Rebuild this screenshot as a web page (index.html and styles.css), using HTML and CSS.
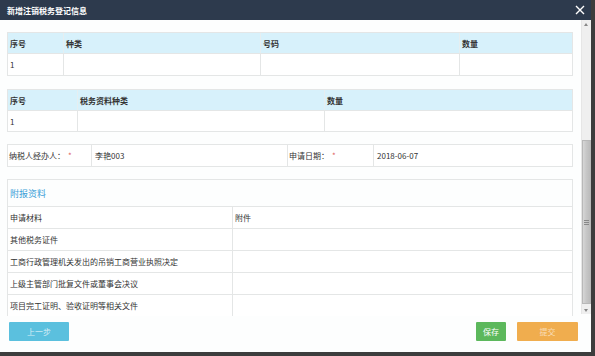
FILE: index.html
```html
<!DOCTYPE html>
<html lang="zh">
<head>
<meta charset="utf-8">
<link rel="stylesheet" href="styles.css">
</head>
<body>
<div class="dialog">
  <div class="header">
    <span class="title">新增注销税务登记信息</span>
    <svg class="close" width="10" height="10" viewBox="0 0 10 10"><path d="M1 1L9 9M9 1L1 9" stroke="#fff" stroke-width="1.4"/></svg>
  </div>
  <div class="main">
    <div class="scroll">
      <div class="grid t1">
        <div class="row head"><div class="c">序号</div><div class="c">种类</div><div class="c">号码</div><div class="c">数量</div></div>
        <div class="row body tall"><div class="c">1</div><div class="c"></div><div class="c"></div><div class="c"></div></div>
      </div>
      <div class="grid t2">
        <div class="row head"><div class="c">序号</div><div class="c">税务资料种类</div><div class="c">数量</div></div>
        <div class="row body"><div class="c">1</div><div class="c"></div><div class="c"></div></div>
      </div>
      <div class="grid t3">
        <div class="row body tall"><div class="c">纳税人经办人：<span class="req">*</span></div><div class="c">李艳003</div><div class="c">申请日期：<span class="req">*</span></div><div class="c">2018-06-07</div></div>
      </div>
      <div class="grid t4">
        <div class="row caption"><div class="c">附报资料</div></div>
        <div class="row body tall"><div class="c">申请材料</div><div class="c">附件</div></div>
        <div class="row body tall"><div class="c">其他税务证件</div><div class="c"></div></div>
        <div class="row body tall"><div class="c">工商行政管理机关发出的吊销工商营业执照决定</div><div class="c"></div></div>
        <div class="row body tall"><div class="c">上级主管部门批复文件或董事会决议</div><div class="c"></div></div>
        <div class="row body tall"><div class="c">项目完工证明、验收证明等相关文件</div><div class="c"></div></div>
      </div>
    </div>
    <div class="scrollbar">
      <div class="arrow up"></div>
      <div class="track"><div class="thumb"><span class="grip"></span></div></div>
      <div class="arrow down"></div>
    </div>
  </div>
  <div class="footer">
    <button class="btn prev">上一步</button>
    <span class="spacer"></span>
    <button class="btn save">保存</button>
    <button class="btn submit">提交</button>
  </div>
</div>
</body>
</html>
```
FILE: styles.css
```css
* { box-sizing: border-box; }
html, body { margin: 0; padding: 0; }
body {
  width: 595px;
  height: 356px;
  background: #3d3d3d;
  font-family: "Noto Sans CJK SC", "Liberation Sans", sans-serif;
  font-size: 8px;
  color: #333;
  overflow: hidden;
}
.dialog {
  width: 591px;
  height: 352px;
  background: #fdfefe;
  display: flex;
  flex-direction: column;
}
.header {
  height: 20px;
  background: #2d3a4d;
  display: flex;
  align-items: center;
  justify-content: space-between;
  padding: 0 6px 0 7px;
  flex: none;
}
.title { color: #fff; font-weight: bold; font-size: 8px; }
.close { display: block; }
.main {
  height: 296px;
  display: flex;
  flex: none;
}
.scroll {
  width: 581px;
  padding: 12px 8px 0 7px;
  overflow: hidden;
}
.grid {
  border: 1px solid #e4e6e6;
  border-bottom: none;
  width: 566px;
}
.t2, .t3, .t4 { margin-top: 12px; }
.t2 { margin-top: 13px; }
.row {
  display: grid;
  height: 21px;
  border-bottom: 1px solid #e4e6e6;
}
.row.tall { height: 22px; }
.t1 .row { grid-template-columns: 56px 197px 199px 1fr; }
.t2 .row { grid-template-columns: 70px 247px 249px 1fr; }
.t3 .row { grid-template-columns: 84px 196px 86px 1fr; }
.t4 .row { grid-template-columns: 225px 1fr; }
.t4 .row.caption { grid-template-columns: 1fr; height: 27px; }
.c {
  display: flex;
  align-items: center;
  padding-left: 2px;
  border-right: 1px solid #e4e6e6;
  white-space: nowrap;
  overflow: hidden;
}
.c:last-child { border-right: none; }
.head { background: #d7f1fb; }
.head .c { font-weight: bold; color: #333; border-right-color: #e6eef0; }
.body { background: #fff; }
.t3 .c { padding-left: 1px; }
.t3 .c:nth-child(2), .t3 .c:nth-child(4) { padding-left: 3px; }
.req { color: #e06060; margin-left: 3px; }
.caption .c { color: #3c9fd8; font-size: 9px; padding-left: 2px; }
.scrollbar {
  width: 10px;
  background: #efefef;
  border-left: 1px solid #e6e6e6;
  display: flex;
  flex-direction: column;
  height: 294px;
}
.arrow { height: 9px; flex: none; position: relative; }
.arrow::after {
  content: "";
  position: absolute;
  left: 2px;
  border-left: 2.5px solid transparent;
  border-right: 2.5px solid transparent;
}
.arrow.up::after { top: 3px; border-bottom: 3px solid #888; }
.arrow.down::after { top: 3px; border-top: 3px solid #888; }
.track { flex: 1; padding-top: 111px; padding-bottom: 2px; }
.thumb {
  height: 164px;
  background: linear-gradient(to right, #d6d6d6, #c6c6c6 50%, #bcbcbc);
  border: 1px solid #b8b8b8;
  display: flex;
  align-items: center;
  justify-content: center;
}
.grip {
  width: 5px;
  height: 5px;
  border-top: 1px solid #888;
  border-bottom: 1px solid #888;
  position: relative;
}
.grip::after {
  content: "";
  position: absolute;
  left: 0; right: 0; top: 1px;
  border-top: 1px solid #888;
}
.footer {
  flex: 1;
  display: flex;
  align-items: flex-start;
  padding: 6px 13px 0 9px;
  gap: 11px;
}
.spacer { flex: 1; }
.btn {
  height: 19px;
  border: none;
  border-radius: 1px;
  font-family: "Noto Sans CJK SC", "Liberation Sans", sans-serif;
  font-size: 8px;
  padding: 0;
  color: rgba(255,255,255,0.75);
}
.prev { width: 60px; background: #5bc0de; }
.save { width: 30px; background: #5cb85c; color: #fff; }
.submit { width: 61px; background: #f0ad4e; color: rgba(255,255,255,0.6); }
```
